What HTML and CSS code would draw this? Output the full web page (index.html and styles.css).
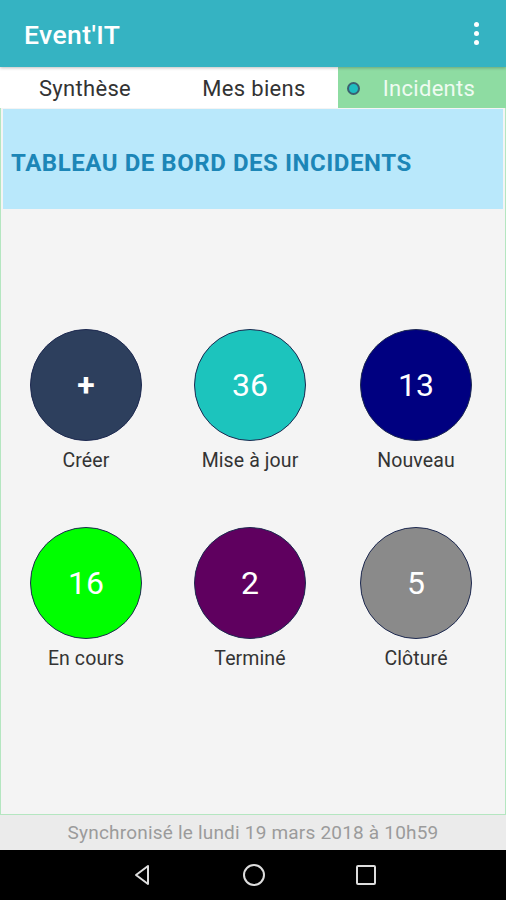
FILE: index.html
```html
<!DOCTYPE html>
<html lang="fr">
<head>
  <meta charset="UTF-8">
  <meta name="viewport" content="width=device-width, initial-scale=1.0">
  <title>Event'IT</title>
  <link rel="stylesheet" href="styles.css">
</head>
<body>
  <div class="screen">
    <header class="app-bar">
      <span class="app-title">Event'IT</span>
      <span class="menu-dots"><i></i><i></i><i></i></span>
    </header>

    <nav class="tabs">
      <div class="tab">Synthèse</div>
      <div class="tab">Mes biens</div>
      <div class="tab tab-active"><span class="tab-dot"></span>Incidents</div>
    </nav>

    <main class="content">
      <div class="board-header">
        <h1>TABLEAU DE BORD DES INCIDENTS</h1>
      </div>
      <div class="board">
        <div class="status">
          <div class="circle c-create">+</div>
          <span class="status-label">Créer</span>
        </div>
        <div class="status">
          <div class="circle c-update">36</div>
          <span class="status-label">Mise à jour</span>
        </div>
        <div class="status">
          <div class="circle c-new">13</div>
          <span class="status-label">Nouveau</span>
        </div>
        <div class="status">
          <div class="circle c-progress">16</div>
          <span class="status-label">En cours</span>
        </div>
        <div class="status">
          <div class="circle c-done">2</div>
          <span class="status-label">Terminé</span>
        </div>
        <div class="status">
          <div class="circle c-closed">5</div>
          <span class="status-label">Clôturé</span>
        </div>
      </div>
    </main>

    <footer class="sync">Synchronisé le lundi 19 mars 2018 à 10h59</footer>

    <div class="nav-bar">
      <svg width="24" height="24" viewBox="0 0 24 24"><path d="M18 3 L6 12 L18 21 Z" fill="none" stroke="#ddd" stroke-width="2" stroke-linejoin="round"/></svg>
      <svg width="24" height="24" viewBox="0 0 24 24"><circle cx="12" cy="12" r="10" fill="none" stroke="#ddd" stroke-width="2"/></svg>
      <svg width="24" height="24" viewBox="0 0 24 24"><rect x="3" y="3" width="18" height="18" rx="1" fill="none" stroke="#ddd" stroke-width="2"/></svg>
    </div>
  </div>
</body>
</html>
```

FILE: styles.css
```css
/* General */
body {
  margin: 0;
  font-family: 'Roboto', 'Liberation Sans', sans-serif;
  background: #000;
}

.screen {
  width: 506px;
  height: 900px;
  display: flex;
  flex-direction: column;
  background: #fff;
}

/* App bar */
.app-bar {
  height: 67px;
  flex: none;
  background: #35b3c2;
  display: flex;
  align-items: center;
  justify-content: space-between;
  padding: 0 24px;
  box-shadow: 0 1px 3px rgba(0, 0, 0, 0.25);
  position: relative;
  z-index: 1;
}

.app-title {
  color: #fff;
  font-size: 26.5px;
  font-weight: 500;
  letter-spacing: 0.4px;
  margin-top: 2px;
}

.menu-dots {
  display: flex;
  flex-direction: column;
  gap: 4px;
  margin-right: 3px;
}

.menu-dots i {
  width: 5px;
  height: 5px;
  border-radius: 50%;
  background: #fff;
}

/* Tabs */
.tabs {
  height: 41px;
  flex: none;
  display: grid;
  grid-template-columns: 170px 168px 168px;
  background: #fff;
}

.tab {
  display: flex;
  align-items: center;
  justify-content: center;
  padding-top: 2px;
  font-size: 22px;
  letter-spacing: 0.3px;
  color: #333;
}

.tab-active {
  background: #8edca2;
  color: #eefbf1;
  position: relative;
  padding-left: 14px;
}

.tab-dot {
  position: absolute;
  left: 9px;
  top: 15px;
  width: 9px;
  height: 9px;
  border-radius: 50%;
  background: #1fbcc0;
  border: 2px solid #3b6070;
}

/* Content */
.content {
  flex: 1;
  background: #f4f4f4;
  border: 1px solid #b4e6c0;
  border-top: none;
  padding: 1px 2px 0 2px;
}

.board-header {
  height: 100px;
  background: #b9e8fb;
  display: flex;
  align-items: center;
  padding: 8px 0 0 8px;
  box-sizing: border-box;
}

.board-header h1 {
  margin: 0;
  font-size: 24px;
  font-weight: 700;
  letter-spacing: 0.55px;
  color: #1c86b7;
}

.board {
  display: grid;
  grid-template-columns: 164px 164px 168px;
  row-gap: 55px;
  padding: 120px 0 0 1px;
}

.status {
  display: flex;
  flex-direction: column;
  align-items: center;
  gap: 8px;
}

.circle {
  width: 110px;
  height: 110px;
  border-radius: 50%;
  border: 1px solid #1d2950;
  display: flex;
  align-items: center;
  justify-content: center;
  color: #fff;
  font-size: 32px;
}

.c-create {
  background: #2d3f5d;
  font-size: 32px;
  font-weight: 700;
}

.c-update { background: #1cc4bd; }
.c-new { background: #000080; }
.c-progress { background: #00ff00; }
.c-done { background: #5f005f; }
.c-closed { background: #8a8a8a; }

.status-label {
  font-size: 19.5px;
  letter-spacing: 0.1px;
  color: #333;
}

/* Footer */
.sync {
  height: 35px;
  flex: none;
  background: #ebebeb;
  color: #9b9b9b;
  font-size: 19px;
  letter-spacing: 0.2px;
  display: flex;
  align-items: center;
  justify-content: center;
}

.nav-bar {
  height: 50px;
  flex: none;
  background: #000;
  display: flex;
  align-items: center;
  justify-content: center;
  gap: 88px;
  padding-left: 2px;
}
```
